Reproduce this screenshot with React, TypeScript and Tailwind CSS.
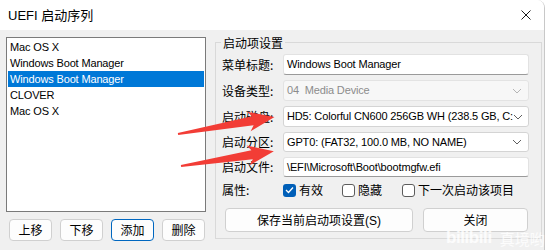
import React from "react";

const font = { fontFamily: '"Noto Sans CJK SC", "Noto Sans", sans-serif' };
const latin = { fontFamily: '"Liberation Sans", "Noto Sans CJK SC", sans-serif', letterSpacing: "-0.15px" };

function Chevron({ color = "#5f5f5f" }: { color?: string }) {
  return (
    <svg width="10" height="6" viewBox="0 0 10 6" className="shrink-0">
      <path d="M1 1 L5 5 L9 1" fill="none" stroke={color} strokeWidth="1" />
    </svg>
  );
}

function Field({
  label,
  value,
  select,
  disabled,
  h = "h-[21px]",
}: {
  label: string;
  value: string;
  select?: boolean;
  disabled?: boolean;
  h?: string;
}) {
  return (
    <div className="flex items-center">
      <div className="w-[61px] text-[12px] text-black leading-none">{label}</div>
      <div
        className={`${h} w-[246px] flex items-center pl-[3px] pr-[6px] rounded-[3px] border ${
          disabled
            ? "bg-[#f7f7f7] border-[#e3e3e3] text-[#8c8c8c]"
            : select
            ? "bg-white border-[#d4d4d4] text-black"
            : "bg-white border-[#e2e2e2] border-b-[#9a9a9a] text-black"
        }`}
      >
        <span className="flex-1 text-[11px] leading-none whitespace-pre" style={latin}>
          {value}
        </span>
        {select && <Chevron color={disabled ? "#b5b5b5" : "#5f5f5f"} />}
      </div>
    </div>
  );
}

function Check({ checked, label }: { checked?: boolean; label: string }) {
  return (
    <div className="flex items-center gap-[3px]">
      {checked ? (
        <div className="w-[13px] h-[13px] rounded-[3px] bg-[#005fb8] flex items-center justify-center">
          <svg width="9" height="8" viewBox="0 0 9 8">
            <path d="M1 4 L3.5 6.5 L8 1.5" fill="none" stroke="white" strokeWidth="1.3" />
          </svg>
        </div>
      ) : (
        <div className="w-[13px] h-[13px] rounded-[3px] bg-white border border-[#5c5c5c]" />
      )}
      <span className="text-[12px] leading-none text-black">{label}</span>
    </div>
  );
}

function Btn({ label, primary, className = "" }: { label: React.ReactNode; primary?: boolean; className?: string }) {
  return (
    <div
      className={`flex items-center justify-center rounded-[4px] border text-[12px] leading-none text-black ${
        primary ? "border-[#0067c0] bg-[#fdfdfd]" : "border-[#d0d0d0] bg-[#fdfdfd]"
      } ${className}`}
    >
      {label}
    </div>
  );
}

export default function App() {
  const items = ["Mac OS X", "Windows Boot Manager", "Windows Boot Manager", "CLOVER", "Mac OS X"];
  return (
    <div className="relative w-[552px] h-[250px] bg-white overflow-hidden" style={font}>
      <div className="w-[545px] h-[250px] flex flex-col rounded-tr-[8px] border-r border-[#c8c8c8] overflow-hidden">
        {/* title bar */}
        <div className="h-[30px] bg-white flex items-center justify-between pl-[8px] pr-[13px] shrink-0">
          <span className="text-[13px] text-black leading-none">
            <span style={{ fontFamily: '"Liberation Sans", sans-serif' }}>UEFI </span>启动序列
          </span>
          <svg width="10" height="10" viewBox="0 0 10 10">
            <path d="M0.5 0.5 L9.5 9.5 M9.5 0.5 L0.5 9.5" stroke="#1a1a1a" strokeWidth="1" />
          </svg>
        </div>
        {/* body */}
        <div className="flex-1 bg-[#f0f0f0] flex pl-[6px]">
          {/* left */}
          <div className="w-[200px] flex flex-col pt-[7px]">
            <div className="h-[175px] bg-white border border-[#7a7a7a] pt-[1px] px-[1px]">
              {items.map((it, i) => (
                <div
                  key={i}
                  className={`h-[16px] flex items-center pl-[2px] text-[11px] leading-none ${
                    i === 2 ? "bg-[#0078d7] text-white" : "text-black"
                  }`}
                  style={latin}
                >
                  {it}
                </div>
              ))}
            </div>
            <div className="flex mt-[7px] pl-[3px] gap-[8px]">
              <Btn label="上移" className="w-[43px] h-[22px]" />
              <Btn label="下移" className="w-[43px] h-[22px]" />
              <Btn label="添加" primary className="w-[43px] h-[22px]" />
              <Btn label="删除" className="w-[43px] h-[22px]" />
            </div>
          </div>
          {/* right group */}
          <div className="ml-[9px] pt-[12px]">
            <div className="relative w-[327px] h-[197px] border border-[#d9d9d9] pl-[6px] pt-[11px]">
              <span className="absolute -top-[8px] left-[5px] px-[2px] bg-[#f0f0f0] text-[12px] leading-[15px] text-black">
                启动项设置
              </span>
              <div className="flex flex-col gap-[5px]">
                <Field label="菜单标题:" value="Windows Boot Manager" />
                <Field label="设备类型:" value="04  Media Device" select disabled />
                <Field label="启动磁盘:" value="HD5: Colorful CN600 256GB WH (238.5 GB, C:" select />
                <Field label="启动分区:" value="GPT0: (FAT32, 100.0 MB, NO NAME)" select h="h-[20px]" />
                <Field label="启动文件:" value="\EFI\Microsoft\Boot\bootmgfw.efi" h="h-[20px]" />
              </div>
              <div className="flex items-center mt-[6px] h-[14px]">
                <div className="w-[61px] text-[12px] leading-none text-black">属性:</div>
                <div className="w-[59px]">
                  <Check checked label="有效" />
                </div>
                <div className="w-[60px]">
                  <Check label="隐藏" />
                </div>
                <Check label="下一次启动该项目" />
              </div>
              <div className="flex mt-[11px] pl-[3px] gap-[10px]">
                <Btn
                  label={
                    <span>
                      保存当前启动项设置<span style={{ fontFamily: '"Liberation Sans", sans-serif' }}>(S)</span>
                    </span>
                  }
                  className="w-[188px] h-[24px]"
                />
                <Btn label="关闭" className="w-[105px] h-[24px]" />
              </div>
            </div>
          </div>
        </div>
      </div>

      {/* watermark */}
      <div className="absolute left-[446px] top-[229px] flex items-end gap-[8px] text-white/80 pointer-events-none">
        <span className="text-[17px] leading-none font-bold tracking-tight" style={{ fontFamily: '"Liberation Sans", sans-serif' }}>
          bilibili
        </span>
        <span className="text-[15px] leading-none">真境哟</span>
      </div>

      {/* annotation arrows */}
      <svg className="absolute inset-0 pointer-events-none" width="552" height="250" viewBox="0 0 552 250">
        <polygon
          points="0,-1 76,-4.5 72,-10 98,0 72,10 76,4.5 0,1"
          fill="#f23d36"
          transform="translate(178,134) rotate(-10)"
        />
        <polygon
          points="0,-1 72,-4.5 68,-10 94,0 68,10 72,4.5 0,1"
          fill="#f23d36"
          transform="translate(181,166) rotate(-9)"
        />
      </svg>
    </div>
  );
}
